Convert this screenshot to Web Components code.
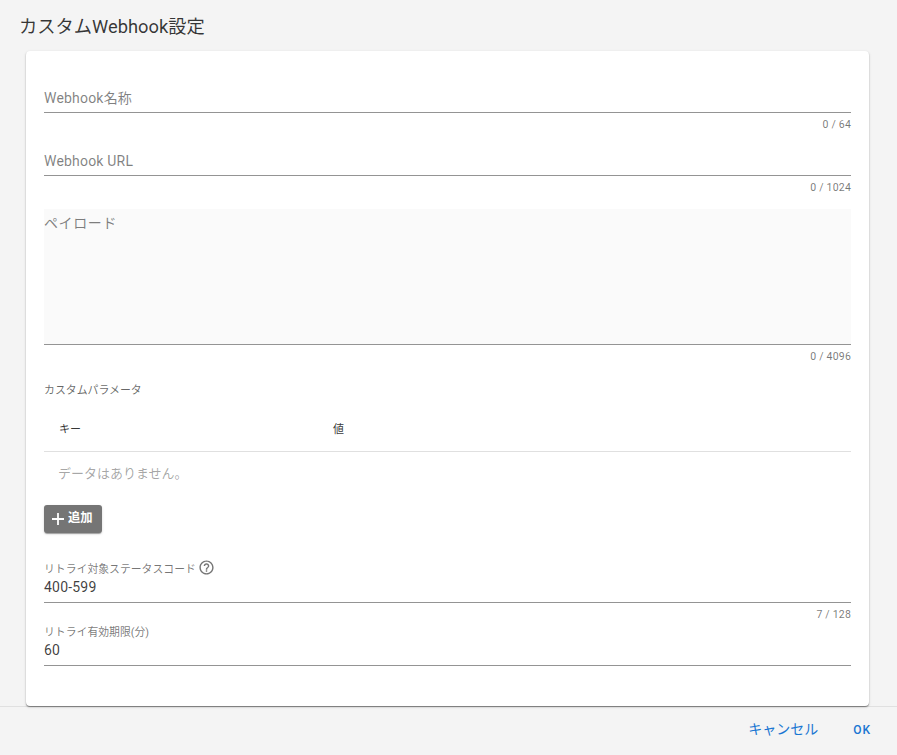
<!DOCTYPE html>
<html lang="ja">
<head>
<meta charset="utf-8">
<title>カスタムWebhook設定</title>
<style>
  html, body { margin: 0; height: 100%; }
  body {
    background: #f4f4f4;
    color: rgba(0, 0, 0, 0.8);
    font-family: Roboto, "Noto Sans CJK JP", sans-serif;
    overflow: hidden;
  }
</style>
</head>
<body>
<webhook-dialog heading="カスタムWebhook設定">
  <text-field placeholder="Webhook名称" counter="0 / 64"></text-field>
  <text-field placeholder="Webhook URL" counter="0 / 1024"></text-field>
  <text-field multiline placeholder="ペイロード" counter="0 / 4096"></text-field>
  <param-table label="カスタムパラメータ"></param-table>
  <text-field label="リトライ対象ステータスコード" help value="400-599" counter="7 / 128"></text-field>
  <text-field label="リトライ有効期限(分)" value="60"></text-field>
</webhook-dialog>

<script>
class WebhookDialog extends HTMLElement {
  constructor() {
    super();
    this.attachShadow({ mode: 'open' });
  }

  connectedCallback() {
    this.shadowRoot.innerHTML = `
      <style>
        :host {
          display: flex;
          flex-direction: column;
          height: 755px;
        }

        h1 {
          margin: 0;
          height: 51px;
          box-sizing: border-box;
          padding: 16px 0 0 19px;
          font-size: 18.3px;
          font-weight: 400;
          line-height: 22px;
          color: rgba(0, 0, 0, 0.78);
        }

        .card {
          margin: 0 28px 0 26px;
          height: 655px;
          box-sizing: border-box;
          padding: 16px 18px 0;
          background: #fff;
          border-radius: 4px;
          box-shadow: 0 1px 1px 0 rgba(0, 0, 0, 0.4), 0 1px 3px 0 rgba(0, 0, 0, 0.16);
          position: relative;
        }

        footer {
          flex: 1;
          border-top: 1px solid #e0e0e0;
          display: flex;
          justify-content: flex-end;
          align-items: flex-start;
          gap: 35px;
          padding: 14px 26px 0 0;
        }

        footer span {
          color: #1976d2;
          font-size: 14px;
          line-height: 17px;
        }

        footer .ok {
          font-size: 12px;
          font-weight: 500;
          letter-spacing: 1px;
          padding-top: 1px;
        }
      </style>
      <h1>${this.getAttribute('heading')}</h1>
      <div class="card"><slot></slot></div>
      <footer>
        <span>キャンセル</span>
        <span class="ok">OK</span>
      </footer>
    `;
  }
}

class TextField extends HTMLElement {
  constructor() {
    super();
    this.attachShadow({ mode: 'open' });
  }

  connectedCallback() {
    const label = this.getAttribute('label');
    const value = this.getAttribute('value');
    const placeholder = this.getAttribute('placeholder');
    const counter = this.getAttribute('counter') || '';
    const helpIcon = this.hasAttribute('help')
      ? `<svg viewBox="0 0 24 24" width="17" height="17" fill="#757575"><path d="M11 18h2v-2h-2v2zm1-16C6.48 2 2 6.48 2 12s4.48 10 10 10 10-4.48 10-10S17.52 2 12 2zm0 18c-4.41 0-8-3.59-8-8s3.59-8 8-8 8 3.59 8 8-3.59 8-8 8zm0-14c-2.21 0-4 1.79-4 4h2c0-1.1.9-2 2-2s2 .9 2 2c0 2-3 1.75-3 5h2c0-2.25 3-2.5 3-5 0-2.21-1.79-4-4-4z"/></svg>`
      : '';

    this.shadowRoot.innerHTML = `
      <style>
        :host {
          display: block;
        }

        :host([multiline]) {
          margin-top: 16px;
        }

        .box {
          height: 46px;
          box-sizing: border-box;
          border-bottom: 1px solid #949494;
          display: flex;
          flex-direction: column;
          justify-content: flex-end;
          padding-bottom: 5px;
        }

        :host([multiline]) .box {
          height: 136px;
          background: #fafafa;
          justify-content: flex-start;
          padding: 4px 0 0;
        }

        .label {
          display: flex;
          align-items: center;
          gap: 2px;
          height: 17px;
          font-size: 10.85px;
          color: rgba(0, 0, 0, 0.54);
        }

        .value, .placeholder {
          font-size: 14px;
          line-height: 20px;
          letter-spacing: 0.2px;
        }

        .value {
          color: rgba(0, 0, 0, 0.76);
          margin-top: 1px;
        }

        .placeholder {
          color: rgba(0, 0, 0, 0.5);
          margin-bottom: -1px;
        }

        :host([multiline]) .placeholder {
          letter-spacing: 0.6px;
        }

        .counter {
          height: 17px;
          box-sizing: border-box;
          padding-top: 3px;
          font-size: 10.5px;
          line-height: 18px;
          letter-spacing: 0.2px;
          text-align: right;
          color: rgba(0, 0, 0, 0.54);
        }
      </style>
      <div class="box">
        ${label ? `<div class="label"><span>${label}</span>${helpIcon}</div>` : ''}
        ${value ? `<div class="value">${value}</div>` : ''}
        ${placeholder ? `<div class="placeholder">${placeholder}</div>` : ''}
      </div>
      <div class="counter">${counter}</div>
    `;
  }
}

class ParamTable extends HTMLElement {
  constructor() {
    super();
    this.attachShadow({ mode: 'open' });
  }

  connectedCallback() {
    this.shadowRoot.innerHTML = `
      <style>
        :host {
          display: block;
          height: 195px;
        }

        .label {
          padding-top: 20px;
          height: 25px;
          font-size: 10.9px;
          line-height: 17px;
          color: rgba(0, 0, 0, 0.6);
        }

        .head {
          display: grid;
          grid-template-columns: 289px 1fr;
          height: 42px;
          padding-top: 2px;
          align-items: center;
          border-bottom: 1px solid #e0e0e0;
          font-size: 11px;
          line-height: 16px;
          color: rgba(0, 0, 0, 0.8);
        }

        .head span:first-child {
          padding-left: 15px;
        }

        .empty {
          height: 53px;
          box-sizing: border-box;
          padding: 12px 0 0 14px;
          font-size: 13px;
          line-height: 20px;
          color: rgba(0, 0, 0, 0.36);
        }
      </style>
      <div class="label">${this.getAttribute('label')}</div>
      <div class="head"><span>キー</span><span>値</span></div>
      <div class="empty">データはありません。</div>
      <flat-button>追加</flat-button>
    `;
  }
}

class FlatButton extends HTMLElement {
  constructor() {
    super();
    this.attachShadow({ mode: 'open' });
  }

  connectedCallback() {
    this.shadowRoot.innerHTML = `
      <style>
        :host {
          display: inline-flex;
          align-items: center;
          gap: 3px;
          width: 58px;
          height: 28px;
          box-sizing: border-box;
          padding-left: 7px;
          background: #757575;
          color: #fff;
          border-radius: 3px;
          font-size: 12.3px;
          font-weight: 700;
          box-shadow: 0 2px 1px -1px rgba(0, 0, 0, 0.2), 0 1px 1px 0 rgba(0, 0, 0, 0.14), 0 1px 3px 0 rgba(0, 0, 0, 0.12);
        }

        .text {
          line-height: 16px;
          margin-bottom: 3px;
        }
      </style>
      <svg viewBox="0 0 14 14" width="14" height="14" fill="#fff"><path d="M6.100 1h1.800v5.100H13v1.800H7.900V13H6.100V7.900H1V6.100h5.100z"/></svg>
      <span class="text"><slot></slot></span>
    `;
  }
}

customElements.define('webhook-dialog', WebhookDialog);
customElements.define('text-field', TextField);
customElements.define('param-table', ParamTable);
customElements.define('flat-button', FlatButton);
</script>
</body>
</html>
